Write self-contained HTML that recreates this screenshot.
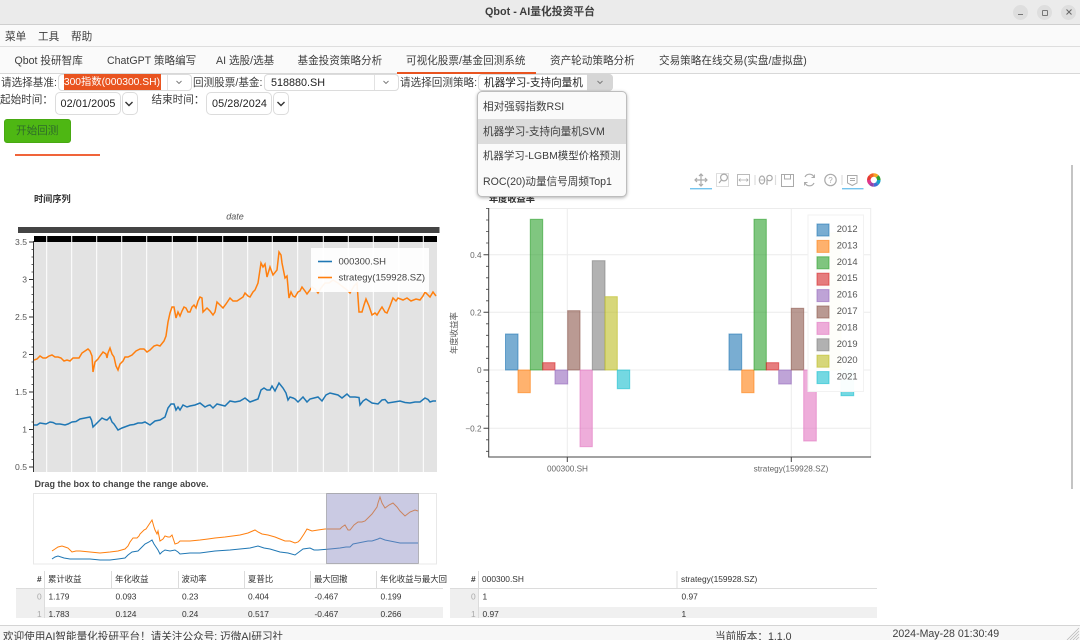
<!DOCTYPE html>
<html lang="zh"><head><meta charset="utf-8"><title>Qbot</title>
<style>
html,body{margin:0;padding:0;width:1080px;height:640px;overflow:hidden;background:#fff}
body{position:relative;font-family:"Liberation Sans","Noto Sans CJK SC",sans-serif;font-size:10.6px;color:#3d3d3d;filter:blur(.35px)}
.t{position:absolute;white-space:nowrap;line-height:14px}
.b{position:absolute;box-sizing:border-box}
.box{position:absolute;box-sizing:border-box;background:#fff;border:1px solid #dcdcdc;border-radius:4px}
svg{position:absolute;left:0;top:0}
svg text{font-family:"Liberation Sans","Noto Sans CJK SC",sans-serif}
</style></head><body>
<!-- title bar -->
<div class="b" style="left:0;top:0;width:1080px;height:25px;background:#ebebeb;border-bottom:1px solid #cfcfcf"></div>
<div class="t" style="left:0;width:1080px;text-align:center;top:5px;font-weight:bold;font-size:10.8px;color:#3d3d3d">Qbot - AI量化投资平台</div>
<div class="b" style="left:1013px;top:4.500px;width:15px;height:15px;border-radius:50%;background:#dedede"></div>
<div class="b" style="left:1037px;top:4.500px;width:15px;height:15px;border-radius:50%;background:#dedede"></div>
<div class="b" style="left:1061px;top:4.500px;width:15px;height:15px;border-radius:50%;background:#dedede"></div>
<div class="b" style="left:1018px;top:14px;width:5px;height:1px;background:#777"></div>
<div class="b" style="left:1042px;top:9.500px;width:6px;height:6px;border:1px solid #777;border-radius:1px"></div>
<svg width="1080" height="30" style="z-index:2"><path d="M1066.500 9.500l5 5M1071.500 9.500l-5 5" stroke="#666" stroke-width="1" fill="none"/></svg>
<!-- menu -->
<div class="b" style="left:0;top:25px;width:1080px;height:22px;background:#fafafa;border-bottom:1px solid #dedede"></div>
<div class="t" style="left:5px;top:30px">菜单</div>
<div class="t" style="left:38px;top:30px">工具</div>
<div class="t" style="left:71px;top:30px">帮助</div>
<!-- tabs -->
<div class="b" style="left:0;top:47px;width:1080px;height:27px;background:#fafafa;border-bottom:1px solid #d8d8d8"></div>
<div class="t" style="left:14.500px;top:54px">Qbot 投研智库</div>
<div class="t" style="left:107px;top:54px">ChatGPT 策略编写</div>
<div class="t" style="left:216px;top:54px">AI 选股/选基</div>
<div class="t" style="left:297.500px;top:54px">基金投资策略分析</div>
<div class="t" style="left:406px;top:54px">可视化股票/基金回测系统</div>
<div class="t" style="left:550px;top:54px">资产轮动策略分析</div>
<div class="t" style="left:659px;top:54px">交易策略在线交易(实盘/虚拟盘)</div>
<div class="b" style="left:397px;top:71.500px;width:139px;height:2px;background:#e95420"></div>
<!-- row 1 -->
<div class="t" style="left:1px;top:76px">请选择基准:</div>
<div class="box" style="left:58px;top:74px;width:134px;height:17px"></div>
<div class="b" style="left:63.500px;top:74px;width:97.500px;height:16px;background:#e95420;overflow:hidden"><span class="t" style="right:1px;top:2px;color:#fff;font-size:10.300px">基准300指数(000300.SH)</span></div>
<div class="b" style="left:167px;top:75px;width:1px;height:15px;background:#e2e2e2"></div>
<div class="t" style="left:193px;top:76px">回测股票/基金:</div>
<div class="box" style="left:264px;top:74px;width:135px;height:17px"></div>
<div class="t" style="left:271px;top:76px;color:#222;font-size:10.800px">518880.SH</div>
<div class="b" style="left:374px;top:75px;width:1px;height:15px;background:#e2e2e2"></div>
<div class="t" style="left:400px;top:76px">请选择回测策略:</div>
<div class="box" style="left:478px;top:74px;width:135px;height:17px"></div>
<div class="b" style="left:587px;top:74px;width:26px;height:17px;background:#d6d6d6;border-radius:0 4px 4px 0"></div>
<div class="t" style="left:484px;top:76px;color:#222">机器学习-支持向量机</div>
<!-- row 2 -->
<div class="t" style="left:0;top:93px">起始时间：</div>
<div class="box" style="left:54.500px;top:92px;width:66px;height:23px;border-radius:5px"></div>
<div class="t" style="left:60.500px;top:96.500px;color:#222;font-size:10.800px;letter-spacing:.1px">02/01/2005</div>
<div class="box" style="left:121.500px;top:92px;width:16px;height:23px;border-radius:5px"></div>
<div class="t" style="left:151.500px;top:93px">结束时间：</div>
<div class="box" style="left:206px;top:92px;width:66px;height:23px;border-radius:5px"></div>
<div class="t" style="left:212px;top:96.500px;color:#222;font-size:10.800px;letter-spacing:.1px">05/28/2024</div>
<div class="box" style="left:273px;top:92px;width:16px;height:23px;border-radius:5px"></div>
<!-- button -->
<div class="b" style="left:4px;top:119px;width:66.500px;height:24px;background:#4eb713;border:1px solid #48a912;border-radius:3px"></div>
<div class="t" style="left:16px;top:124px;color:#2f6b2a;font-size:10.600px">开始回测</div>
<div class="b" style="left:14.500px;top:154px;width:85px;height:2.400px;background:#f0643a"></div>
<!-- scrollbar -->
<div class="b" style="left:1071px;top:165px;width:2px;height:324px;background:#c4c4c4"></div>

<svg width="1080" height="640" viewBox="0 0 1080 640">
<!-- combo arrows -->
<g fill="none" stroke="#777" stroke-width="0.9"><path d="M176.500 81l2.500 2.500 2.500-2.500M383.500 81l2.500 2.500 2.500-2.500M597.500 81l2.500 2.500 2.500-2.500"/></g>
<g fill="none" stroke="#333" stroke-width="1.4"><path d="M125.500 102l3.500 3.500 3.500-3.500M277.500 102l3.500 3.500 3.500-3.500"/></g>

<!-- left chart header -->
<text x="34" y="202" font-size="9.200" font-weight="bold" fill="#333">时间序列</text>
<text x="235" y="219.500" font-size="9" font-style="italic" fill="#555" text-anchor="middle">date</text>
<rect x="18" y="227" width="421.500" height="6" fill="#444"/>
<rect x="34" y="236" width="403" height="6" fill="#000"/>
<rect x="34" y="242" width="403" height="230" fill="#e3e3e3"/>
<g stroke="#fff" stroke-width="1"><path d="M46.700 236V472M71.700 236V472M96.700 236V472M121.700 236V472M146.700 236V472M172.300 236V472M197.300 236V472M222.700 236V472M247.700 236V472M272.300 236V472M297.700 236V472M323.300 236V472M348.300 236V472M373.300 236V472M398.700 236V472M423.300 236V472"/></g>
<!-- y axis -->
<path d="M33.500 241V472" stroke="#333" stroke-width="1"/>
<path d="M29 242h5M29 279.500h5M29 317h5M29 354.500h5M29 392h5M29 429.500h5M29 467h5" stroke="#333" stroke-width="1"/>
<path d="M31.500 249.500h2M31.500 257h2M31.500 264.500h2M31.500 272h2M31.500 287h2M31.500 294.500h2M31.500 302h2M31.500 309.500h2M31.500 324.500h2M31.500 332h2M31.500 339.500h2M31.500 347h2M31.500 362h2M31.500 369.500h2M31.500 377h2M31.500 384.500h2M31.500 399.500h2M31.500 407h2M31.500 414.500h2M31.500 422h2M31.500 437h2M31.500 444.500h2M31.500 452h2M31.500 459.500h2" stroke="#333" stroke-width="0.8"/>
<g font-size="8.600" fill="#555" text-anchor="end"><text x="27" y="245">3.5</text><text x="27" y="282.500">3</text><text x="27" y="320">2.5</text><text x="27" y="357.500">2</text><text x="27" y="395">1.5</text><text x="27" y="432.500">1</text><text x="27" y="470">0.5</text></g>
<!-- lines -->
<polyline fill="none" stroke="#1f77b4" stroke-width="1.500" points="34,425 37,425 40,423 43,423.500 46,424 50,422 53,422.500 56,424 60,424 65,425 68,424 72,422 76,421.500 80,419 85,418 90,417 91.500,420 93,427 97,423 102,418 105,419.500 107,420 110,417 112,422 114,424 116,427 118,430 122,428 126,426.500 130,425 134,424.500 138,423 142,423 145,422 150,425 155,421 160,420 165,417 168,408 171,404 174,404 176,410 178,407 180,410 183,405 187,407 190,406 195,405 200,403 205,407 208,405.500 210,405 213,408 217,404 221,405 225,406 230,401 235,402 240,401 245,398 250,402 254,400.500 258,399 261,390 264,388 267,390 270,390 272,386 275,391 279,383 283,388 286,393 288,400 290,397 293,398 295,399 298,402 303,397 307,402 310,399 314,398 318,397 322,401 326,395 330,393 334,394 338,395 342,398 347,394 350,397 355,397 359,397.500 360,405 363,401 366,399 369,401 372,403 378,404 382,400 385,399.500 388,403 394,402 400,401 405,402.500 410,403 415,402 420,402 425,398 428,399.500 430,402 433,401 436,401"/>
<polyline fill="none" stroke="#ff7f0e" stroke-width="1.500" points="34,360 37,359 40,356 43,358 46,358 49,356 52,355 55,357 58,357 61,358 64,361 67,360 70,361 73,358 76,358 79,358 82,353 85,351 88,349 90,351 92,356 93,372 95,362 98,359 100,356 103,352 106,354 107,358 108,353 110,348 112,354 114,357 116,366 118,370 120,364 123,361 125,357 128,357 132,355 136,351 140,349 144,349 147,352 150,350 154,346 157,345 160,346 164,341 166,336 168,322 170,313 172,307 174,307 176,318 178,312 180,316 182,311 184,307 186,308 188,312 190,312 192,307 194,305 196,308 198,301 200,297 202,298 203,312 205,310 207,308 210,311 213,315 215,312 217,302 220,305 223,308 226,304 230,298 233,301 237,301 240,299 243,297 245,293 248,296 250,297 253,292 255,290 258,283 261,263 263,267 265,264 267,277 270,267 273,275 277,270 279,252 281,255 282,263 285,278 287,276 289,298 291,292 293,296 295,297 298,292 300,291 302,287 305,291 307,294 310,290 312,287 315,289 318,293 321,288 325,283 329,283 333,280 338,283 343,287 347,290 350,293 354,286 357,283 359,312 362,312 364,305 366,299 369,306 372,315 375,313 377,315 380,310 382,307 385,312 387,313 390,306 393,298 396,301 398,298 403,300 407,298 411,301 416,299 420,300 423,296 425,292 428,295 430,297 433,292 436,296"/>
<!-- legend -->
<rect x="311" y="248" width="118" height="44" fill="#fff" fill-opacity=".93"/>
<path d="M318 261.500h14" stroke="#1f77b4" stroke-width="1.600"/>
<path d="M318 277.500h14" stroke="#ff7f0e" stroke-width="1.600"/>
<text x="338.500" y="264.500" font-size="9.500" fill="#444">000300.SH</text>
<text x="338.500" y="280.500" font-size="9.500" fill="#444">strategy(159928.SZ)</text>

<!-- range -->
<text x="34.500" y="487" font-size="9" font-weight="bold" fill="#444">Drag the box to change the range above.</text>
<rect x="33.500" y="493.500" width="403" height="70.500" fill="#fff" stroke="#e8e8e8"/>
<polyline fill="none" stroke="#ff7f0e" stroke-width="1" points="52,551 55,549 58,547 62,546 65,547 68,548 72,552 76,551 80,551 90,552 100,553 110,552 118,551 125,549 128,546 130,542 133,538 137,538 139,536 140,534 144,530 146,529 148,526 152,520 154,527 155,530 157,534 158,531 160,541 163,539 165,536 168,537 170,537 172,535 175,544 178,543 180,541 190,541 200,540 208,539 215,538 225,537 240,535 248,533 255,530 258,532 262,534 268,535 275,537 280,539 285,541 290,541 295,543 298,542 300,540 304,534 307,529 312,531 318,530 325,529 332,529 340,529 342,527 345,525 348,530 350,530 354,525 358,522 362,522 365,521 369,517 372,514 377,507 378,503 380,497 382,503 385,508 389,505 393,503 397,507 400,511 405,516 410,512 415,510 418,511"/>
<polyline fill="none" stroke="#1f77b4" stroke-width="1" points="52,559 55,557 58,556 64,558 70,559 80,559 90,559 100,560 110,560 118,559 125,558 128,555 132,552 138,551 142,547 145,544 149,542 152,540 154,544 156,547 158,550 160,554 162,552 165,550 170,551 175,550 178,552 180,554 190,553 200,553 215,551 230,550 240,549 250,548 258,546 264,548 270,549 280,552 288,553 295,555 299,552 303,549 310,548 314,550 318,550 330,549 340,548 346,547 350,547 353,544 358,543 368,541 372,541 378,539 380,538 385,540 390,541 400,543 410,543 418,543"/>
<rect x="326.500" y="493.500" width="92" height="70" fill="#8a8ac0" fill-opacity=".45" stroke="#666" stroke-width="0.800" stroke-dasharray="1 1"/>

<!-- left table -->
<g stroke="#dcdcdc" stroke-width="1"><path d="M16 588.500H443M44.500 571V618M111.500 571V588M178.500 571V588M244.500 571V588M310.500 571V588M376.500 571V588"/></g>
<rect x="16" y="589" width="28" height="29" fill="#efefef"/>
<rect x="45" y="607" width="398" height="11" fill="#f0f0f0"/>
<g font-size="8.400" fill="#333">
<text x="37" y="582" font-weight="bold">#</text>
<text x="48" y="582">累计收益</text><text x="115" y="582">年化收益</text><text x="181.500" y="582">波动率</text><text x="248" y="582">夏普比</text><text x="314" y="582">最大回撤</text><text x="380" y="582">年化收益与最大回</text>
<text x="37" y="599.500" fill="#aaa">0</text><text x="48.500" y="599.500">1.179</text><text x="115.500" y="599.500">0.093</text><text x="182" y="599.500">0.23</text><text x="248" y="599.500">0.404</text><text x="314.500" y="599.500">-0.467</text><text x="380.500" y="599.500">0.199</text>
<text x="37" y="617" fill="#aaa">1</text><text x="48.500" y="617">1.783</text><text x="115.500" y="617">0.124</text><text x="182" y="617">0.24</text><text x="248" y="617">0.517</text><text x="314.500" y="617">-0.467</text><text x="380.500" y="617">0.266</text>
</g>
<!-- right table -->
<g stroke="#dcdcdc" stroke-width="1"><path d="M450 588.500H877M478.500 571V618M677 571V588"/></g>
<rect x="450" y="589" width="28" height="29" fill="#efefef"/>
<rect x="479" y="607" width="398" height="11" fill="#f0f0f0"/>
<g font-size="8.400" fill="#333">
<text x="471" y="582" font-weight="bold">#</text>
<text x="482" y="582">000300.SH</text><text x="681" y="582">strategy(159928.SZ)</text>
<text x="471" y="599.500" fill="#aaa">0</text><text x="482.500" y="599.500">1</text><text x="681.500" y="599.500">0.97</text>
<text x="471" y="617" fill="#aaa">1</text><text x="482.500" y="617">0.97</text><text x="681.500" y="617">1</text>
</g>

<!-- right chart -->
<text x="489" y="202" font-size="9.200" font-weight="bold" fill="#333">年度收益率</text>
<rect x="488.700" y="208.500" width="382" height="248.500" fill="#fff" stroke="#ececec"/>
<g stroke="#ececec" stroke-width="1"><path d="M489 254.700H871M489 312.300H871M489 370H871M489 428.300H871M567.300 208V457M791.300 208V457"/></g>
<path d="M488.700 208V457H871" fill="none" stroke="#444" stroke-width="1"/>
<path d="M483.500 254.700h5M483.500 312.300h5M483.500 370h5M483.500 428.300h5M567.300 457v5M791.300 457v5" stroke="#444" stroke-width="1"/>
<path d="M486 208.500h2.500M486 220h2.500M486 231.500h2.500M486 243h2.500M486 266.300h2.500M486 277.800h2.500M486 289.300h2.500M486 300.800h2.500M486 323.800h2.500M486 335.300h2.500M486 346.800h2.500M486 358.300h2.500M486 381.500h2.500M486 393h2.500M486 404.600h2.500M486 416.100h2.500M486 439.800h2.500M486 451.300h2.500" stroke="#444" stroke-width="0.800"/>
<g font-size="8.200" fill="#666" text-anchor="end"><text x="481.500" y="258">0.4</text><text x="481.500" y="315.500">0.2</text><text x="481.500" y="373">0</text><text x="481.500" y="431.500">−0.2</text></g>
<text font-size="8.200" fill="#666" text-anchor="middle" x="567.500" y="471.500">000300.SH</text>
<text font-size="8.200" fill="#666" text-anchor="middle" x="791" y="471.500">strategy(159928.SZ)</text>
<text font-size="8.400" fill="#555" text-anchor="middle" transform="translate(457,333) rotate(-90)">年度收益率</text>
<!-- bars -->
<g fill-opacity=".6" stroke-opacity=".6" stroke-width="1">
<rect x="505.500" y="334" width="12.500" height="36" fill="#1f77b4" stroke="#1f77b4"/>
<rect x="518" y="370" width="12.300" height="22.700" fill="#ff7f0e" stroke="#ff7f0e"/>
<rect x="530.300" y="219.300" width="12.400" height="150.700" fill="#2ca02c" stroke="#2ca02c"/>
<rect x="542.700" y="362.700" width="12.300" height="7.300" fill="#d62728" stroke="#d62728"/>
<rect x="555" y="370" width="12.700" height="14" fill="#9467bd" stroke="#9467bd"/>
<rect x="567.700" y="310.700" width="12.300" height="59.300" fill="#8c564b" stroke="#8c564b"/>
<rect x="580" y="370" width="12.300" height="76.700" fill="#e377c2" stroke="#e377c2"/>
<rect x="592.300" y="260.700" width="12.700" height="109.300" fill="#7f7f7f" stroke="#7f7f7f"/>
<rect x="605" y="296.700" width="12.300" height="73.300" fill="#bcbd22" stroke="#bcbd22"/>
<rect x="617.300" y="370" width="12.400" height="18.700" fill="#17becf" stroke="#17becf"/>
<rect x="729" y="334" width="12.700" height="36" fill="#1f77b4" stroke="#1f77b4"/>
<rect x="741.700" y="370" width="12.300" height="22.700" fill="#ff7f0e" stroke="#ff7f0e"/>
<rect x="754" y="219.300" width="12.300" height="150.700" fill="#2ca02c" stroke="#2ca02c"/>
<rect x="766.300" y="362.700" width="12.400" height="7.300" fill="#d62728" stroke="#d62728"/>
<rect x="778.700" y="370" width="12.600" height="14" fill="#9467bd" stroke="#9467bd"/>
<rect x="791.300" y="308.300" width="12.400" height="61.700" fill="#8c564b" stroke="#8c564b"/>
<rect x="803.700" y="370" width="12.600" height="71" fill="#e377c2" stroke="#e377c2"/>
<rect x="816.300" y="233" width="12.400" height="137" fill="#7f7f7f" stroke="#7f7f7f"/>
<rect x="828.700" y="233" width="12.300" height="137" fill="#bcbd22" stroke="#bcbd22"/>
<rect x="841" y="370" width="12.700" height="25.700" fill="#17becf" stroke="#17becf"/>
</g>
<!-- bar legend -->
<rect x="808" y="215" width="55.500" height="176.500" fill="#fff" fill-opacity=".96" stroke="#f2f2f2"/>
<g fill-opacity=".6" stroke-opacity=".6" stroke-width="1">
<rect x="817" y="224" width="12" height="12" fill="#1f77b4" stroke="#1f77b4"/>
<rect x="817" y="240.400" width="12" height="12" fill="#ff7f0e" stroke="#ff7f0e"/>
<rect x="817" y="256.800" width="12" height="12" fill="#2ca02c" stroke="#2ca02c"/>
<rect x="817" y="273.200" width="12" height="12" fill="#d62728" stroke="#d62728"/>
<rect x="817" y="289.600" width="12" height="12" fill="#9467bd" stroke="#9467bd"/>
<rect x="817" y="306" width="12" height="12" fill="#8c564b" stroke="#8c564b"/>
<rect x="817" y="322.400" width="12" height="12" fill="#e377c2" stroke="#e377c2"/>
<rect x="817" y="338.800" width="12" height="12" fill="#7f7f7f" stroke="#7f7f7f"/>
<rect x="817" y="355.200" width="12" height="12" fill="#bcbd22" stroke="#bcbd22"/>
<rect x="817" y="371.600" width="12" height="12" fill="#17becf" stroke="#17becf"/>
</g>
<g font-size="9.400" fill="#555"><text x="836.700" y="232">2012</text><text x="836.700" y="248.400">2013</text><text x="836.700" y="264.800">2014</text><text x="836.700" y="281.200">2015</text><text x="836.700" y="297.600">2016</text><text x="836.700" y="314">2017</text><text x="836.700" y="330.400">2018</text><text x="836.700" y="346.800">2019</text><text x="836.700" y="363.200">2020</text><text x="836.700" y="379.600">2021</text></g>

<!-- toolbar -->
<g fill="none" stroke="#aaa" stroke-width="1.200">
<path d="M695 180h12M701 174v12M697 178l-2 2 2 2M705 178l2 2-2 2M699 176l2-2 2 2M699 184l2 2 2-2"/>
<rect x="716.500" y="173.500" width="12" height="13" stroke-dasharray="1 1" stroke-width="0.800"/>
<circle cx="724" cy="177.500" r="3.400"/><path d="M721.500 180l-2.500 3"/>
<rect x="737.500" y="174.500" width="12" height="11" stroke-width="0.800"/><path d="M739 180h9M740.500 178.500l-1.500 1.500 1.500 1.500M746.500 178.500l1.500 1.500-1.500 1.500" stroke-width="0.800"/>
<path d="M755 175v10" stroke="#ddd"/>
<ellipse cx="762" cy="180" rx="2.700" ry="4"/><path d="M759.300 180h5.400" stroke-width="0.800"/>
<circle cx="769.500" cy="178" r="2.700"/><path d="M767 180v5"/>
<path d="M775.500 175v10" stroke="#ddd"/>
<path d="M781.500 174.500h12v12h-12zM784.500 174.500v4.500h6v-4.500" stroke-width="1"/>
<path d="M814 177a5 5 0 0 0-9-0M805 183a5 5 0 0 0 9 0"/><path d="M814.500 174.500v3h-3M804.500 185.500v-3h3" stroke-width="0.900"/>
<circle cx="830.500" cy="180" r="5.700"/>
<path d="M842 175v10" stroke="#ddd"/>
<path d="M847.500 175.500h9.500v7.500l-4.750 2.500-4.750-2.500zM850 178.500h5M850 180.500h5" stroke-width="1"/>
</g>
<text x="830.500" y="183" font-size="8" fill="#aaa" text-anchor="middle">?</text>
<rect x="690" y="188" width="22" height="1.400" fill="#74c4ee"/>
<rect x="842" y="188" width="21.500" height="1.400" fill="#74c4ee"/>
<g fill="none" stroke-width="3.600">
<path d="M873.800 175a5 5 0 0 1 3.500 1.500" stroke="#f5a623"/>
<path d="M877.300 176.500a5 5 0 0 1 1.500 3.500" stroke="#2ca02c"/>
<path d="M878.800 180a5 5 0 0 1-1.500 3.500" stroke="#17a2c8"/>
<path d="M877.300 183.500a5 5 0 0 1-3.500 1.500" stroke="#3f6fd8"/>
<path d="M873.800 185a5 5 0 0 1-3.500-1.500" stroke="#8e44ad"/>
<path d="M870.300 183.500a5 5 0 0 1-1.500-3.500" stroke="#e0358b"/>
<path d="M868.800 180a5 5 0 0 1 1.500-3.500" stroke="#e53935"/>
<path d="M870.300 176.500a5 5 0 0 1 3.500-1.500" stroke="#f0641e"/>
</g>
</svg>

<!-- popup -->
<div class="b" style="left:477px;top:91px;width:150px;height:106px;background:#fafafa;border:1px solid #bdbdbd;border-radius:5px;box-shadow:0 1px 3px rgba(0,0,0,.3)"></div>
<div class="b" style="left:478px;top:119px;width:148px;height:24.500px;background:#dcdcdc"></div>
<div class="t" style="left:483px;top:100px">相对强弱指数RSI</div>
<div class="t" style="left:483px;top:125px">机器学习-支持向量机SVM</div>
<div class="t" style="left:483px;top:149.500px;font-size:10.450px">机器学习-LGBM模型价格预测</div>
<div class="t" style="left:483px;top:175px">ROC(20)动量信号周频Top1</div>

<!-- status -->
<div class="b" style="left:0;top:625px;width:1080px;height:15px;background:#f7f7f7;border-top:1px solid #d4d4d4"></div>
<div class="t" style="left:3px;top:630px;font-size:10.600px">欢迎使用AI智能量化投研平台！请关注公众号: 迈微AI研习社</div>
<div class="t" style="left:715px;top:630px;font-size:10.600px">当前版本：1.1.0</div>
<div class="t" style="left:892.500px;top:627px;font-size:10.600px">2024-May-28 01:30:49</div>
<svg width="1080" height="640" style="pointer-events:none"><path d="M1067 640l12-12M1070 640l9-9M1073 640l6-6M1076 640l3-3" stroke="#bbb" stroke-width="0.800" fill="none"/></svg>
</body></html>
